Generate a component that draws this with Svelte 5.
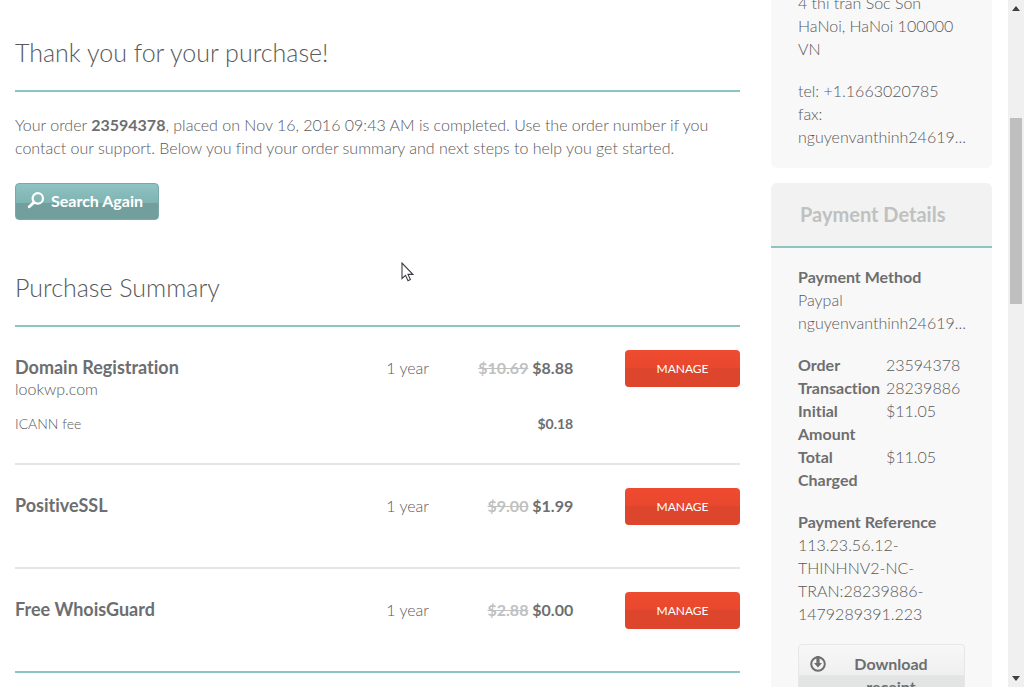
<!-- App.svelte -->
<script>
  const items = [
    { name: 'Domain Registration', domain: 'lookwp.com', term: '1 year', oldPrice: '$10.69', price: '$8.88', fee: { name: 'ICANN fee', price: '$0.18' } },
    { name: 'PositiveSSL', term: '1 year', oldPrice: '$9.00', price: '$1.99' },
    { name: 'Free WhoisGuard', term: '1 year', oldPrice: '$2.88', price: '$0.00' }
  ];

  const details = [
    { label: 'Order', value: '23594378' },
    { label: 'Transaction', value: '28239886' },
    { label: 'Initial Amount', value: '$11.05' },
    { label: 'Total Charged', value: '$11.05' }
  ];
</script>

<div class="page">
  <main>
    <h1>Thank you for your purchase!</h1>
    <p class="intro">
      Your order <strong>23594378</strong>, placed on Nov 16, 2016 09:43 AM is completed. Use the order number if you contact our support. Below you find your order summary and next steps to help you get started.
    </p>
    <button class="search">
      <svg width="18" height="18" viewBox="0 0 18 18" aria-hidden="true">
        <circle cx="10.8" cy="6.4" r="5.2" fill="none" stroke="#fff" stroke-width="2.2" />
        <path d="M6.8 10.6 L2.2 14.8" stroke="#fff" stroke-width="2.8" stroke-linecap="round" />
      </svg>
      Search Again
    </button>

    <h2>Purchase Summary</h2>
    <table class="summary">
      {#each items as item}
        <tbody>
          <tr>
            <td class="name">
              <strong>{item.name}</strong>
              {#if item.domain}<div class="domain">{item.domain}</div>{/if}
            </td>
            <td class="term">{item.term}</td>
            <td class="price"><s>{item.oldPrice}</s> {item.price}</td>
            <td class="action"><button class="manage">MANAGE</button></td>
          </tr>
          {#if item.fee}
            <tr class="fee">
              <td colspan="2">{item.fee.name}</td>
              <td class="price">{item.fee.price}</td>
              <td></td>
            </tr>
          {/if}
        </tbody>
      {/each}
    </table>
  </main>

  <aside>
    <section class="card address">
      <p>4 thi tran Soc Son<br />HaNoi, HaNoi 100000<br />VN</p>
      <p>tel: +1.1663020785<br />fax:<br />nguyenvanthinh24619...</p>
    </section>

    <section class="card">
      <h3>Payment Details</h3>
      <div class="body">
        <p><strong>Payment Method</strong><br />Paypal<br />nguyenvanthinh24619...</p>
        <table class="details">
          <tbody>
            {#each details as row}
              <tr>
                <th>{row.label}</th>
                <td>{row.value}</td>
              </tr>
            {/each}
          </tbody>
        </table>
        <p><strong>Payment Reference</strong><br />113.23.56.12-<br />THINHNV2-NC-<br />TRAN:28239886-<br />1479289391.223</p>
        <button class="download">
          <svg width="16" height="16" viewBox="0 0 16 16" aria-hidden="true">
            <circle cx="8" cy="8" r="6.8" fill="none" stroke="#6d6e70" stroke-width="2" />
            <path d="M6.4 0 H9.6 V7 H12 L8 11.6 L4 7 H6.4 Z" fill="#6d6e70" />
          </svg>
          <span>Download receipt</span>
        </button>
      </div>
    </section>
  </aside>

  <div class="scrollbar">
    <svg width="8" height="5" viewBox="0 0 8 5" aria-hidden="true"><path d="M0 5 L4 0 L8 5 Z" fill="#404040" /></svg>
    <div class="track"><div class="thumb"></div></div>
    <svg width="8" height="5" viewBox="0 0 8 5" aria-hidden="true"><path d="M0 0 L4 5 L8 0 Z" fill="#404040" /></svg>
  </div>

  <svg class="cursor" width="13" height="20" viewBox="0 0 13 20" aria-hidden="true">
    <path d="M1 1 V16.5 L4.5 13.3 L7 18.7 L9.4 17.6 L7 12.4 H11.8 Z" fill="#fff" stroke="#3c3c46" stroke-width="1.1" />
  </svg>
</div>

<style>
  :global(body) {
    background: #fff;
    overflow: hidden;
  }

  .page {
    position: relative;
    display: flex;
    height: 100vh;
    overflow: hidden;
    padding-left: 15px;
    font-family: Lato, sans-serif;
    font-size: 16px;
    font-weight: 300;
    font-variant-ligatures: none;
    line-height: 23px;
    color: #58595b;
  }

  strong, th, .price {
    font-weight: 700;
    color: #6d6e70;
  }

  p {
    margin: 0 0 19px;
  }

  button {
    font-family: inherit;
    border: none;
    cursor: pointer;
  }

  main {
    flex: 1;
    min-width: 0;
  }

  h1, h2 {
    margin: 0;
    font-size: 25px;
    font-weight: 300;
    line-height: 32px;
    border-bottom: 2px solid #8dc3c3;
  }

  h1 {
    padding: 36px 0 22px;
  }

  h2 {
    margin-top: 51px;
    padding-bottom: 22px;
  }

  .intro {
    margin: 21px 0 24px;
  }

  .search {
    display: flex;
    align-items: center;
    gap: 6px;
    height: 37px;
    padding: 0 15px 2px 11px;
    border: 1px solid #7aa9a8;
    border-radius: 4px;
    background: linear-gradient(#8fc2c2 0, #7fb4b3 54%, #729f9d 55%, #729f9d 100%);
    color: #fff;
    font-size: 16px;
    font-weight: 700;
  }

  .summary {
    width: 100%;
    table-layout: fixed;
    border-collapse: collapse;
  }

  .summary tbody {
    border-bottom: 2px solid #e6e6e6;
  }

  .summary tbody:last-child {
    border-bottom-color: #8dc3c3;
  }

  .summary td {
    padding: 29px 0 0;
    vertical-align: top;
  }

  .name {
    width: 51.2%;
  }

  .name strong {
    font-size: 18px;
  }

  .domain {
    line-height: 20px;
  }

  .term {
    width: 10%;
  }

  .price {
    width: 15.8%;
    text-align: right;
  }

  s {
    color: #bfc1c1;
  }

  .summary .action {
    padding-top: 23px;
    text-align: right;
  }

  .summary tr:last-child .action {
    padding-bottom: 42px;
  }

  .summary .fee td {
    padding: 13px 0 28px;
    font-size: 14px;
  }

  .manage {
    display: block;
    width: 115px;
    height: 37px;
    margin-left: auto;
    border-radius: 4px;
    background: linear-gradient(#ee4b30 0, #ea482e 48%, #dd452d 50%, #dd452d 100%);
    color: #fff;
    font-size: 12px;
  }

  aside {
    flex: none;
    width: 221px;
    margin: 0 16px 0 31px;
  }

  .card {
    border-radius: 6px;
    background: #f8f8f8;
    margin-bottom: 15px;
  }

  .address {
    margin-top: -9px;
    padding: 0 27px 1px;
  }

  h3 {
    margin: 0;
    padding: 20px 29px;
    border-bottom: 2px solid #8dc3c3;
    border-radius: 6px 6px 0 0;
    background: #f2f2f2;
    color: #bfc1c1;
    font-size: 20px;
    font-weight: 700;
  }

  .body {
    padding: 17px 27px;
  }

  .details {
    margin-bottom: 19px;
    border-collapse: collapse;
  }

  .details th, .details td {
    padding: 0;
    vertical-align: top;
    text-align: left;
  }

  .details th {
    width: 88px;
  }

  .download {
    display: flex;
    align-items: flex-start;
    gap: 10px;
    width: 100%;
    padding: 7px 18px 7px 11px;
    border: 1px solid #e6e7e7;
    border-radius: 4px;
    background: linear-gradient(#f8f8f8 0, #efefef 50%, #e3e5e4 51%, #e3e5e4 100%);
    color: #6d6e70;
    font-size: 16px;
    font-weight: 700;
    line-height: 23px;
  }

  .download svg {
    flex: none;
    margin-top: 4px;
  }

  .download span {
    flex: 1;
  }

  .scrollbar {
    flex: none;
    box-sizing: border-box;
    display: flex;
    flex-direction: column;
    align-items: center;
    width: 16px;
    padding: 6px 0;
    background: #f0f0f0;
  }

  .track {
    flex: 1;
    width: 12px;
  }

  .thumb {
    height: 28%;
    margin-top: 107px;
    background: #bfbfbf;
  }

  .cursor {
    position: absolute;
    left: 401px;
    top: 262px;
  }
</style>
